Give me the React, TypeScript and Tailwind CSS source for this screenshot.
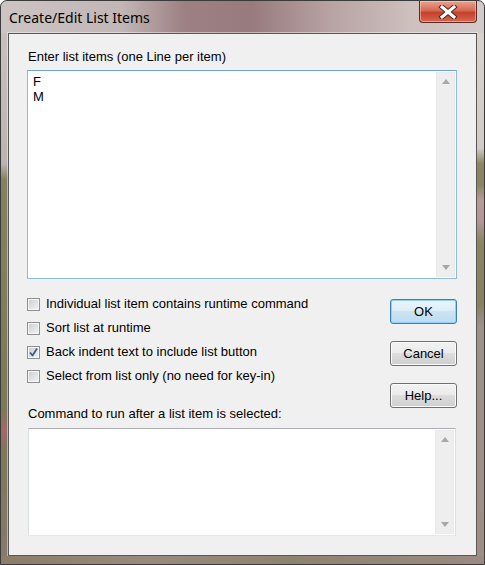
import React from 'react';

const ScrollBar: React.FC = () => (
    <div className="flex w-[19px] shrink-0 flex-col justify-between border border-[#e9e9e9] bg-[#eeeeee]">
        <div className="flex h-[17px] items-center justify-center">
            <svg width="8" height="5" viewBox="0 0 8 5">
                <path d="M4 0L8 5H0z" fill="#a8a8a8" />
            </svg>
        </div>
        <div className="flex h-[17px] items-center justify-center">
            <svg width="8" height="5" viewBox="0 0 8 5">
                <path d="M0 0H8L4 5z" fill="#a8a8a8" />
            </svg>
        </div>
    </div>
);

const CheckBox: React.FC<{ label: string; checked?: boolean }> = ({ label, checked }) => (
    <div className="flex h-6 items-center">
        <span className="flex h-[13px] w-[13px] shrink-0 items-center justify-center border border-[#8e8f8f] bg-[linear-gradient(135deg,#c9cdd1,#f4f4f4)] shadow-[inset_0_0_0_1px_#f6f6f6]">
            {checked && (
                <svg width="11" height="11" viewBox="0 0 11 11">
                    <path d="M2 5.5L4.5 8.5L9 1.5" fill="none" stroke="#3f5795" strokeWidth="1.8" strokeLinejoin="round" />
                </svg>
            )}
        </span>
        <span className="ml-[6px] whitespace-nowrap">{label}</span>
    </div>
);

const Button: React.FC<{ label: string; primary?: boolean }> = ({ label, primary }) => (
    <div
        className={
            primary
                ? 'flex h-[25px] w-[67px] items-center justify-center rounded-[3px] border border-[#3c7fb1] bg-[linear-gradient(#eaf5fc_0%,#dcedf8_50%,#cbe4f4_50%,#bcdcef_100%)] shadow-[inset_0_0_0_1px_#8fd0f4]'
                : 'flex h-[25px] w-[67px] items-center justify-center rounded-[3px] border border-[#707070] bg-[linear-gradient(#f2f2f2_0%,#ebebeb_50%,#dddddd_50%,#cfcfcf_100%)] shadow-[inset_0_0_0_1px_#fbfbfb]'
        }
    >
        {label}
    </div>
);

const App: React.FC = () => {
    return (
        <div className="flex h-[565px] w-[485px] flex-col overflow-hidden rounded-t-[7px] border border-[#3b3b3b] bg-[#8a8270] font-['Liberation_Sans',Arial,sans-serif] text-[13px] leading-4 text-black">
            {/* title bar */}
            <div className="flex h-[32px] shrink-0 items-start justify-between bg-[linear-gradient(90deg,#cdc4c4_0%,#c2b6b6_25%,#9d8082_38%,#987b7d_52%,#b7a3a1_68%,#cdc0bd_85%,#d3cbcb_100%)]">
                <div className="pl-[8px] pt-[7px] font-['Noto_Sans',sans-serif] text-[14px] leading-5 text-black">
                    Create/Edit List Items
                </div>
                <div className="mr-[7px] flex h-[22px] w-[58px] items-center justify-center rounded-b-[4px] border border-t-0 border-[#5a2a22] bg-[linear-gradient(#e8a493_0%,#d56a52_45%,#c7402a_55%,#d5684f_100%)] shadow-[inset_0_0_0_1px_rgba(255,220,210,0.5)]">
                    <svg width="20" height="14" viewBox="0 0 20 14">
                        <path d="M4 2L16 12M16 2L4 12" stroke="#4a2a28" strokeWidth="5" strokeLinecap="square" />
                        <path d="M4 2L16 12M16 2L4 12" stroke="#ffffff" strokeWidth="3" strokeLinecap="square" />
                    </svg>
                </div>
            </div>

            <div className="flex min-h-0 flex-1">
                {/* left frame */}
                <div className="w-[7px] shrink-0 bg-[linear-gradient(#c8c0bf_0%,#bcb4b1_25%,#858160_28%,#7c7959_72%,#a06a66_76%,#7d7858_80%,#867a6a_100%)]" />

                {/* client area */}
                <div className="flex w-[469px] shrink-0 flex-col border border-[#575757] bg-[#f0f0f0] pb-[19px] pl-[18px] pr-[19px] pt-[15px] shadow-[0_0_0_1px_rgba(255,255,255,0.45)]">
                    <div className="pl-px">Enter list items (one Line per item)</div>

                    <div className="mt-[5px] flex h-[209px] border border-[#8dbbe0] border-t-[#6fa4d4] bg-white p-px">
                        <div className="flex-1 pl-[4px] pt-[2px] leading-[15px]">
                            <div>F</div>
                            <div>M</div>
                        </div>
                        <ScrollBar />
                    </div>

                    <div className="mt-[13px] flex justify-between">
                        <div className="flex flex-col">
                            <CheckBox label="Individual list item contains runtime command" />
                            <CheckBox label="Sort list at runtime" />
                            <CheckBox label="Back indent text to include list button" checked />
                            <CheckBox label="Select from list only (no need for key-in)" />
                            <div className="mt-[18px] pl-px">Command to run after a list item is selected:</div>
                        </div>
                        <div className="mt-[7px] flex flex-col gap-[17px]">
                            <Button label="OK" primary />
                            <Button label="Cancel" />
                            <Button label="Help..." />
                        </div>
                    </div>

                    <div className="mx-px mt-[6px] flex h-[108px] border border-[#dbdfe6] border-t-[#abadb3] border-b-[#e3e9ef] bg-white p-px">
                        <div className="flex-1" />
                        <ScrollBar />
                    </div>
                </div>

                {/* right frame */}
                <div className="w-[7px] shrink-0 bg-[linear-gradient(#d9d1cd_0%,#d2cac6_22%,#8c8663_25%,#8a8462_29%,#b89a98_32%,#b49696_36%,#8a8460_40%,#878160_52%,#a0908a_56%,#9e8e86_100%)]" />
            </div>

            {/* bottom frame */}
            <div className="h-[8px] shrink-0 bg-[linear-gradient(90deg,#8c7c68_0%,#9a8a7c_30%,#8d8470_60%,#9c8a80_100%)]" />
        </div>
    );
};

export default App;
